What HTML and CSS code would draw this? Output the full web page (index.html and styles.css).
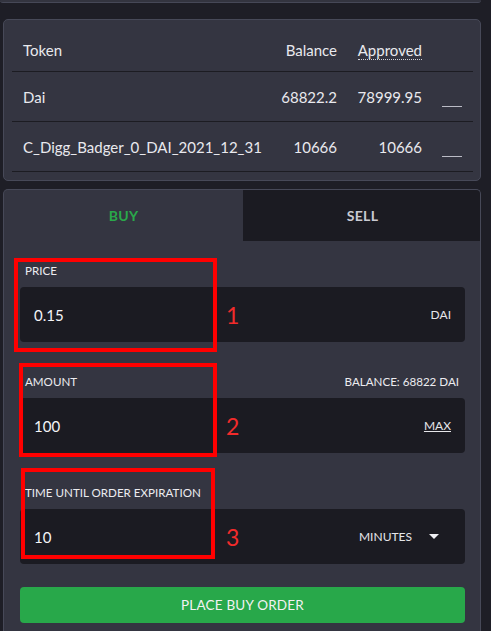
FILE: index.html
```html
<!DOCTYPE html>
<html>
<head>
<meta charset="utf-8">
<link rel="stylesheet" href="styles.css">
</head>
<body>
<div class="prev-card"></div>
<div class="card tokens">
  <table class="token-table">
    <colgroup><col class="w-token"><col class="w-bal"><col class="w-appr"><col class="w-act"></colgroup>
    <thead>
      <tr><th class="c-token">Token</th><th class="c-num">Balance</th><th class="c-num"><span class="dotted">Approved</span></th><th class="c-act"></th></tr>
    </thead>
    <tbody>
      <tr><td class="c-token">Dai</td><td class="c-num">68822.2</td><td class="c-num">78999.95</td><td class="c-act"><span class="dash"></span></td></tr>
      <tr><td class="c-token">C_Digg_Badger_0_DAI_2021_12_31</td><td class="c-num">10666</td><td class="c-num">10666</td><td class="c-act"><span class="dash"></span></td></tr>
    </tbody>
  </table>
</div>
<div class="card order">
  <div class="tabs">
    <div class="tab active">BUY</div>
    <div class="tab">SELL</div>
  </div>
  <div class="form">
    <div class="field">
      <div class="label-row"><span>PRICE</span></div>
      <div class="input"><span class="value">0.15</span><span class="note">1</span><span class="suffix">DAI</span></div>
      <div class="mark mark1"></div>
    </div>
    <div class="field">
      <div class="label-row"><span>AMOUNT</span><span>BALANCE: 68822 DAI</span></div>
      <div class="input"><span class="value">100</span><span class="note">2</span><span class="suffix link">MAX</span></div>
      <div class="mark mark2"></div>
    </div>
    <div class="field">
      <div class="label-row"><span>TIME UNTIL ORDER EXPIRATION</span></div>
      <div class="input"><span class="value">10</span><span class="note">3</span><span class="suffix select">MINUTES<span class="caret"></span></span></div>
      <div class="mark mark3"></div>
    </div>
    <button class="submit">PLACE BUY ORDER</button>
  </div>
</div>
</body>
</html>
```
FILE: styles.css
```css
html, body { margin: 0; padding: 0; }
body {
  background: #1e1e26;
  font-family: "Lato", "Open Sans", sans-serif;
  color: #e9e9ee;
  width: 491px;
  height: 631px;
  overflow: hidden;
}
.prev-card {
  margin-left: 0;
  width: 481px;
  height: 2px;
  background: #33343f;
  border-bottom: 1px solid #464857;
  border-radius: 0 0 5px 5px;
}
.card {
  background: #343541;
  border: 1px solid #474958;
  border-radius: 5px;
  margin-left: 3px;
  width: 476px;
  box-sizing: content-box;
}
.tokens {
  margin-top: 16px;
  padding: 9px 7px 8px 8px;
  width: 461px;
}
.token-table {
  width: 100%;
  border-collapse: collapse;
  table-layout: fixed;
  font-size: 15px;
}
.w-bal { width: 74px; }
.w-appr { width: 85px; }
.w-act { width: 51px; }
.token-table th { font-weight: 400; height: 42px; }
.token-table td { height: 49px; }
.token-table th, .token-table td {
  border-bottom: 1px solid #1c1c22;
  padding: 0;
  white-space: nowrap;
}
.c-token { text-align: left; padding-left: 11px !important; }
.c-num { text-align: right; }
.dotted { border-bottom: 1px dotted #d0d0d8; }
.dash {
  display: block;
  width: 20px;
  height: 1px;
  background: #bbbcc6;
  margin: 20px 0 0 20px;
}
.order {
  margin-top: 8px;
  height: 460px;
  border-bottom: none;
  border-radius: 5px 5px 0 0;
  overflow: hidden;
}
.tabs { display: flex; height: 51px; }
.tab {
  flex: 0 0 239px;
  display: flex;
  align-items: center;
  justify-content: center;
  font-size: 14px;
  font-weight: 700;
  color: #c9cad2;
  background: #1b1b22;
  letter-spacing: 0.3px;
}
.tab.active { background: transparent; color: #2aa84a; }
.form { padding: 22px 15px 0 16px; }
.field { position: relative; margin-bottom: 32px; }
.field:nth-child(3) { margin-bottom: 23px; }
.label-row {
  display: flex;
  justify-content: space-between;
  height: 16px;
  line-height: 16px;
  font-size: 11.6px;
  padding: 0 6px 0 5px;
  margin-bottom: 8px;
  color: #ececf0;
}
.input {
  height: 55px;
  background: #1b1b22;
  border-radius: 4px;
  display: flex;
  align-items: center;
  padding: 0 14px;
  font-size: 15px;
}
.value { width: 190px; color: #f4f4f7; }
.note {
  color: #f22b2b;
  font-size: 23px;
  margin-left: 2px;
}
.suffix { margin-left: auto; font-size: 12px; color: #e6e6ea; }
.link { text-decoration: underline; }
.select { display: flex; align-items: center; margin-right: 12px; }
.caret {
  display: inline-block;
  width: 0; height: 0;
  border-left: 5px solid transparent;
  border-right: 5px solid transparent;
  border-top: 5px solid #f0f0f4;
  margin-left: 17px;
}
.mark {
  position: absolute;
  border: 4px solid #ff0000;
}
.mark1 { left: -6px; top: -5px; width: 195px; height: 86px; }
.mark2 { left: -1px; top: -11px; width: 190px; height: 86px; }
.mark3 { left: 1px; top: -17px; width: 186px; height: 83px; }
.submit {
  display: block;
  width: 100%;
  height: 36px;
  border: none;
  border-radius: 4px;
  background: #28a84a;
  color: #f2f2f2;
  font-family: inherit;
  font-size: 13.5px;
  letter-spacing: 0.2px;
}
```
